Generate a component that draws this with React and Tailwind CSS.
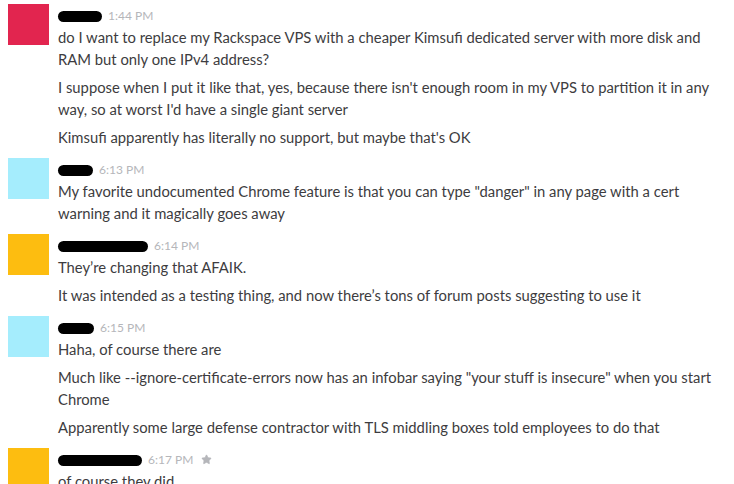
import { Star } from 'lucide-react'

const MESSAGES = [
  {
    id:     1,
    color:  'bg-[#e2254f]',
    name:   'w-[44px]',
    time:   '1:44 PM',
    lines: [
      'do I want to replace my Rackspace VPS with a cheaper Kimsufi dedicated server with more disk and RAM but only one IPv4 address?',
      "I suppose when I put it like that, yes, because there isn't enough room in my VPS to partition it in any way, so at worst I'd have a single giant server",
      "Kimsufi apparently has literally no support, but maybe that's OK",
    ],
  },
  {
    id:     2,
    color:  'bg-[#a5edfd]',
    name:   'w-[35px]',
    time:   '6:13 PM',
    lines: [
      'My favorite undocumented Chrome feature is that you can type "danger" in any page with a cert warning and it magically goes away',
    ],
  },
  {
    id:     3,
    color:  'bg-[#fdbd10]',
    name:   'w-[90px]',
    time:   '6:14 PM',
    lines: [
      'They\u2019re changing that AFAIK.',
      'It was intended as a testing thing, and now there\u2019s tons of forum posts suggesting to use it',
    ],
  },
  {
    id:     4,
    color:  'bg-[#a5edfd]',
    name:   'w-[36px]',
    time:   '6:15 PM',
    lines: [
      'Haha, of course there are',
      'Much like --ignore-certificate-errors now has an infobar saying "your stuff is insecure" when you start Chrome',
      'Apparently some large defense contractor with TLS middling boxes told employees to do that',
    ],
  },
  {
    id:     5,
    color:  'bg-[#fdbd10]',
    name:   'w-[84px]',
    time:   '6:17 PM',
    star:   true,
    lines: ['of course they did'],
  },
]

function Message({ msg }) {
  return (
    <div className="flex gap-[9px] pl-[8px] pr-[10px] pb-[10px]">
      <div className={`w-[41px] h-[41px] shrink-0 ${msg.color}`} />
      <div className="flex-1 min-w-0">
        <div className="flex items-center h-[22px]">
          <span className={`h-[11px] mt-[2px] rounded-full bg-black ${msg.name}`} />
          <span className="ml-[6px] text-[12px] text-[#b5b6ba] mt-[1px]">{msg.time}</span>
          {msg.star && (
            <Star size={11} className="ml-[8px] text-[#b5b6ba] fill-[#b5b6ba]" strokeWidth={1.5} />
          )}
        </div>
        {msg.lines.map((line, i) => (
          <p key={i} className={`text-[14.8px] leading-[22px] text-[#3d3c40] ${i > 0 ? 'mt-[6px]' : ''}`}>
            {line}
          </p>
        ))}
      </div>
    </div>
  )
}

export default function App() {
  return (
    <div className="w-[734px] h-[484px] overflow-hidden bg-white pt-[4px] font-['Lato',sans-serif]">
      {MESSAGES.map(msg => (
        <Message key={msg.id} msg={msg} />
      ))}
    </div>
  )
}
